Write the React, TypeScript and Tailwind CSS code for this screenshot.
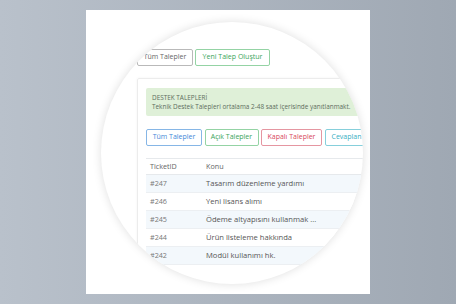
import React from 'react';

const rows = [
  { id: '#247', subject: 'Tasarım düzenleme yardımı' },
  { id: '#246', subject: 'Yeni lisans alımı' },
  { id: '#245', subject: 'Ödeme altyapısını kullanmak ...' },
  { id: '#244', subject: 'Ürün listeleme hakkında' },
  { id: '#242', subject: 'Modül kullanımı hk.' },
];

function App() {
  return (
    <div
      className="flex h-[304px] w-[456px] items-start bg-gradient-to-r from-[#b9c1cb] to-[#9fa8b3] pl-[86px] pt-[10px]"
      style={{ fontFamily: '"Open Sans", "Liberation Sans", sans-serif' }}
    >
      <div className="relative h-[284px] w-[284px] overflow-hidden bg-white">
        {/* magnifier lens */}
        <div className="absolute left-[15px] top-[12px] h-[262px] w-[262px] overflow-hidden rounded-full bg-white shadow-[0_0_10px_rgba(0,0,0,0.13)]">
          <div className="w-[300px] pl-[36px] pt-[27px]">
            <div className="flex gap-[2px] whitespace-nowrap text-[7px]">
              <button className="flex h-[17px] w-[56px] items-center justify-center rounded-[2px] border border-[#b9b9b9] text-[#666]">
                Tüm Talepler
              </button>
              <button className="flex h-[17px] w-[75px] items-center justify-center rounded-[2px] border border-[#94d3a4] text-[#3aa55a]">
                Yeni Talep Oluştur
              </button>
            </div>

            <div className="mt-[12px] h-[220px] rounded-[2px] border border-[#ececec] px-[8px] pt-[9px] shadow-[0_0_3px_rgba(0,0,0,0.05)]">
              <div className="flex h-[28px] flex-col justify-center rounded-[2px] bg-[#dff0d8] pl-[6px] text-[6.4px] leading-[9.5px] text-[#5d6d5d]">
                <div>DESTEK TALEPLERİ</div>
                <div className="whitespace-nowrap">Teknik Destek Talepleri ortalama 2-48 saat içerisinde yanıtlanmakt.</div>
              </div>

              <div className="mt-[13px] flex gap-[2.5px] whitespace-nowrap text-[7px]">
                <button className="flex h-[17px] w-[56px] items-center justify-center rounded-[2px] border border-[#86b6e6] text-[#3f88d8]">
                  Tüm Talepler
                </button>
                <button className="flex h-[17px] w-[54px] items-center justify-center rounded-[2px] border border-[#94d3a4] text-[#3aa55a]">
                  Açık Talepler
                </button>
                <button className="flex h-[17px] w-[61px] items-center justify-center rounded-[2px] border border-[#e596a1] text-[#d8475c]">
                  Kapalı Talepler
                </button>
                <button className="flex h-[17px] w-[40px] items-center justify-start overflow-hidden rounded-[2px] border border-[#86cfdb] pl-[6px] text-[#37aec2]">
                  Cevaplan
                </button>
              </div>

              <div className="mt-[12px] text-[7.2px] text-[#666]">
                <div className="flex h-[17px] items-center border-y border-[#e6e9ec] pl-[4px]">
                  <div className="w-[56px]">TicketID</div>
                  <div>Konu</div>
                </div>
                {rows.map((r, i) => (
                  <div
                    key={r.id}
                    className={
                      'flex h-[18px] items-center whitespace-nowrap border-b border-[#eceff2] pl-[4px] ' +
                      (i % 2 === 0 ? 'bg-[#f3f8fc]' : 'bg-white')
                    }
                  >
                    <div className="w-[56px] text-[#777]">{r.id}</div>
                    <div className="text-[7.6px] text-[#555]">{r.subject}</div>
                  </div>
                ))}
              </div>
            </div>
          </div>
        </div>
      </div>
    </div>
  );
}

export default App;
